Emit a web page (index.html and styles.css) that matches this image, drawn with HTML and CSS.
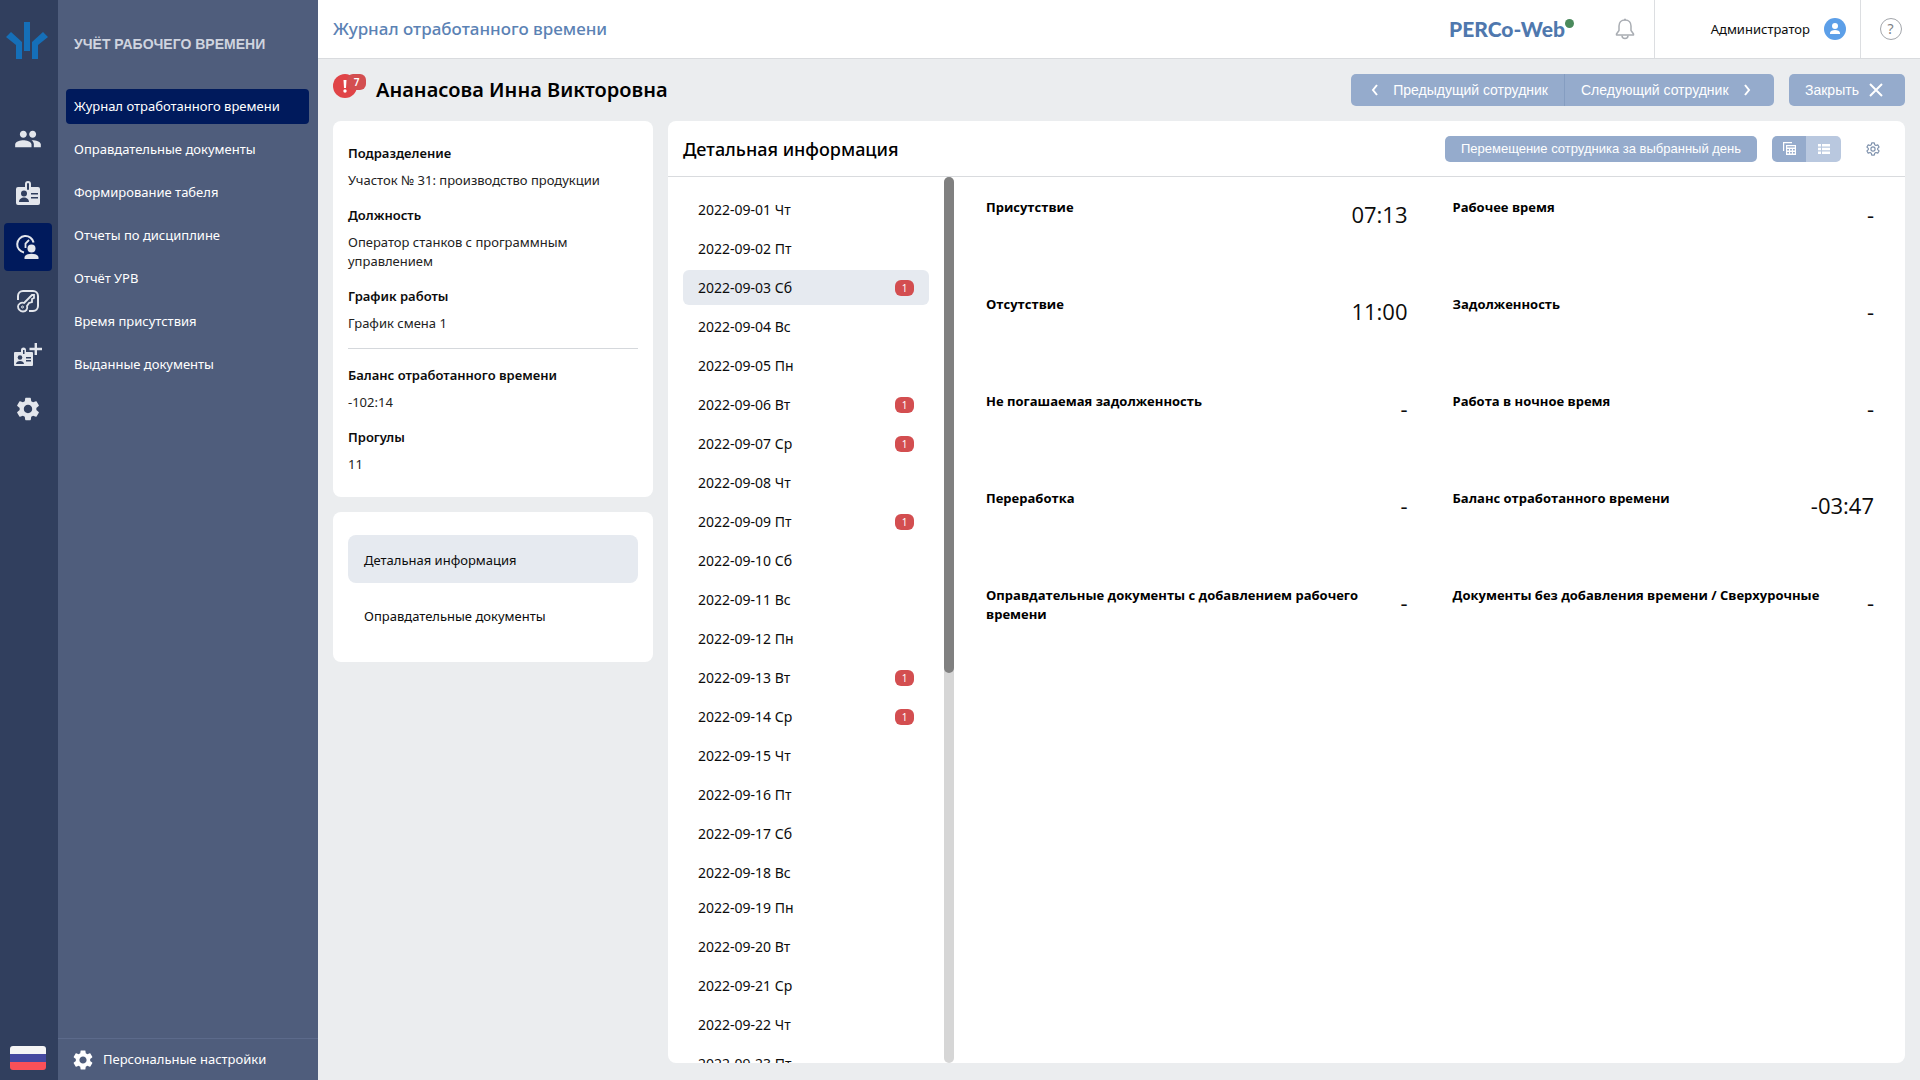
FILE: index.html
```html
<!DOCTYPE html>
<html lang="ru">
<head>
<meta charset="utf-8">
<meta name="viewport" content="width=device-width, initial-scale=1">
<title>PERCo-Web — Журнал отработанного времени</title>
<link rel="stylesheet" href="styles.css">
</head>
<body>
<div class="app">
  <nav class="rail" aria-label="Разделы">
    <a href="#" class="rail-logo" aria-label="PERCo">
      <svg width="42" height="38" viewBox="0 0 42 38" fill="#156fb8"><path d="M18 0h6v29h-6zM0 15l5-5 11 10v17h-6V23zM42 15l-5-5-11 10v17h6V23z"/></svg>
    </a>
    <div class="rail-items">
      <a href="#" class="rail-item" aria-label="Персонал">
        <svg width="28" height="28" viewBox="0 0 24 24" fill="#e3e6ec"><path d="M16 11c1.66 0 2.99-1.34 2.99-3S17.66 5 16 5s-3 1.34-3 3 1.34 3 3 3zm-8 0c1.66 0 2.99-1.34 2.99-3S9.66 5 8 5 5 6.34 5 8s1.34 3 3 3zm0 2c-2.33 0-7 1.17-7 3.5V19h14v-2.5c0-2.33-4.67-3.5-7-3.5zm8 0c-.29 0-.62.02-.97.05 1.16.84 1.97 1.97 1.97 3.45V19h6v-2.500c0-2.330-4.670-3.500-7-3.500z"/></svg>
      </a>
      <a href="#" class="rail-item" aria-label="Бюро пропусков">
        <svg width="24" height="24" viewBox="0 0 24 24"><path fill="#e3e6ec" d="M2 6h7V3a3 3 0 0 1 6 0v3h7a2 2 0 0 1 2 2v14a2 2 0 0 1-2 2H2a2 2 0 0 1-2-2V8a2 2 0 0 1 2-2z"/><rect x="11" y="2" width="2" height="7" rx="1" fill="#313f5e"/><circle cx="8" cy="12.500" r="3" fill="#313f5e"/><path d="M3 21c0-6 10-6 10 0zM15 12h7v1.600h-7zM15 16h7v1.600h-7z" fill="#313f5e"/></svg>
      </a>
      <a href="#" class="rail-item active" aria-label="Учёт рабочего времени" aria-current="page">
        <svg width="24" height="26" viewBox="0 0 24 26" fill="none"><path d="M8 18.500A8.300 8.300 0 1 1 17.600 8.500" stroke="#e3e6ec" stroke-width="2"/><path d="M9.500 14V9.500L13 6" stroke="#e3e6ec" stroke-width="1.800"/><circle cx="15.500" cy="14.500" r="4" fill="#e3e6ec"/><path d="M8.500 25v-1.500c0-5 14-5 14 0V25z" fill="#e3e6ec"/></svg>
      </a>
      <a href="#" class="rail-item" aria-label="Контроль доступа">
        <svg width="24" height="24" viewBox="0 0 24 24" fill="none" stroke="#e3e6ec" stroke-width="2"><path d="M2 11V7a5 5 0 0 1 5-5h10a5 5 0 0 1 5 5v10a5 5 0 0 1-5 5h-4"/><path d="M8 14l8-8h2v3l-2 1v3l-3 1-2 3c1 3-1 5.500-4 5.500S2 20 2 17.500 5 13 8 14z" stroke-width="1.800"/><circle cx="6.500" cy="18" r="1" stroke-width="1"/></svg>
      </a>
      <a href="#" class="rail-item" aria-label="Заказ пропуска">
        <svg width="28" height="24" viewBox="0 0 28 24"><path fill="#e3e6ec" d="M1 9h6V7a2.500 2.500 0 0 1 5 0v2h6a1 1 0 0 1 1 1v12a1 1 0 0 1-1 1H1a1 1 0 0 1-1-1V10a1 1 0 0 1 1-1z"/><path d="M9 7h1.500v4H9zM12 14h5v1.500h-5zM12 17h5v1.500h-5zM2 21c0-4 8-4 8 0z" fill="#313f5e"/><circle cx="6" cy="14.500" r="2.300" fill="#313f5e"/><path d="M15.500 6H28M21.800 0v12" stroke="#e3e6ec" stroke-width="2.400"/></svg>
      </a>
      <a href="#" class="rail-item" aria-label="Администрирование">
        <svg width="28" height="28" viewBox="0 0 24 24" fill="#e3e6ec"><use href="#gear"/></svg>
      </a>
    </div>
    <button class="lang" type="button" aria-label="Русский"><span class="flag"></span></button>
  </nav>

  <aside class="sidebar">
    <h2 class="sidebar-title">УЧЁТ РАБОЧЕГО ВРЕМЕНИ</h2>
    <nav class="menu">
      <a href="#" class="menu-item active" aria-current="page">Журнал отработанного времени</a>
      <a href="#" class="menu-item">Оправдательные документы</a>
      <a href="#" class="menu-item">Формирование табеля</a>
      <a href="#" class="menu-item">Отчеты по дисциплине</a>
      <a href="#" class="menu-item">Отчёт УРВ</a>
      <a href="#" class="menu-item">Время присутствия</a>
      <a href="#" class="menu-item">Выданные документы</a>
    </nav>
    <a href="#" class="personal">
      <svg width="24" height="24" viewBox="0 0 24 24" fill="#fff"><path id="gear" d="M19.140 12.940c.04-.3.06-.61.06-.94s-.02-.64-.07-.94l2.030-1.580c.18-.14.23-.41.12-.61l-1.920-3.320c-.12-.22-.37-.29-.59-.22l-2.390.96c-.5-.38-1.030-.7-1.620-.94L14.400 2.810c-.04-.24-.24-.41-.48-.41h-3.840c-.24 0-.43.17-.47.41l-.36 2.540c-.59.24-1.130.57-1.620.94l-2.390-.96c-.22-.08-.47 0-.59.22L2.740 8.870c-.12.21-.08.47.12.61l2.030 1.580c-.05.3-.09.63-.09.94s.02.64.07.94l-2.030 1.580c-.18.14-.23.41-.12.61l1.920 3.320c.12.22.37.29.59.22l2.390-.96c.5.38 1.030.7 1.620.94l.36 2.540c.05.24.24.41.48.41h3.840c.24 0 .44-.17.47-.41l.36-2.540c.59-.24 1.130-.56 1.620-.94l2.390.96c.22.08.47 0 .59-.22l1.920-3.320c.12-.22.07-.47-.12-.61l-2.010-1.580zM12 15.600c-1.980 0-3.600-1.620-3.600-3.600s1.620-3.600 3.600-3.600 3.600 1.620 3.600 3.600-1.620 3.600-3.600 3.600z"/></svg>
      Персональные настройки
    </a>
  </aside>

  <main class="main">
    <header class="topbar">
      <h1 class="page-title">Журнал отработанного времени</h1>
      <div class="brand">PERCo-Web<span class="brand-dot"></span></div>
      <button class="icon-btn bell" type="button" aria-label="Уведомления">
        <svg width="20" height="22" viewBox="0 0 20 22" fill="none" stroke="#a9adb3" stroke-width="1.500"><path d="M10 2c-4 0-6 2.800-6 6v4.500L1.500 16v1h17v-1L16 12.500V8c0-3.200-2-6-6-6z" stroke-linejoin="round"/><path d="M7 17.500c0 4 6 4 6 0M9 1.500h2"/></svg>
      </button>
      <button class="user" type="button">Администратор
        <svg width="22" height="22" viewBox="0 0 22 22"><circle cx="11" cy="11" r="11" fill="#5c9fe8"/><circle cx="11" cy="8" r="3" fill="#fff"/><path d="M6 16v-1c0-4 10-4 10 0v1z" fill="#fff"/></svg>
      </button>
      <button class="icon-btn help" type="button" aria-label="Справка"><span class="help-mark">?</span></button>
    </header>

    <div class="employee">
      <span class="alert">
        <svg width="24" height="24" viewBox="0 0 24 24"><circle cx="12" cy="12" r="12" fill="#e04447"/><path d="M10.500 6h3l-.5 8h-2z" fill="#fff"/><circle cx="12" cy="17" r="1.700" fill="#fff"/></svg>
        <span class="alert-count">7</span>
      </span>
      <h2 class="employee-name">Ананасова Инна Викторовна</h2>
      <div class="pager">
        <button class="btn prev" type="button"><svg width="8" height="12" viewBox="0 0 8 12"><path d="M6 1L2 6l4 5"/></svg>Предыдущий сотрудник</button>
        <button class="btn next" type="button">Следующий сотрудник<svg width="8" height="12" viewBox="0 0 8 12"><path d="M2 1l4 5-4 5"/></svg></button>
      </div>
      <button class="btn close" type="button">Закрыть<svg width="14" height="14" viewBox="0 0 14 14"><path d="M1 1l12 12M13 1L1 13"/></svg></button>
    </div>

    <div class="content">
      <div class="side">
        <section class="card info">
          <dl class="facts">
            <div><dt>Подразделение</dt><dd>Участок № 31: производство продукции</dd></div>
            <div><dt>Должность</dt><dd>Оператор станков с программным управлением</dd></div>
            <div><dt>График работы</dt><dd>График смена 1</dd></div>
          </dl>
          <dl class="facts totals">
            <div><dt>Баланс отработанного времени</dt><dd>-102:14</dd></div>
            <div><dt>Прогулы</dt><dd>11</dd></div>
          </dl>
        </section>
        <nav class="card tabs">
          <a href="#" class="tab active" aria-current="page">Детальная информация</a>
          <a href="#" class="tab">Оправдательные документы</a>
        </nav>
      </div>

      <section class="card details">
        <header class="details-head">
          <h3 class="details-title">Детальная информация</h3>
          <button class="btn small" type="button">Перемещение сотрудника за выбранный день</button>
          <div class="toggle">
            <button class="toggle-btn" type="button" aria-label="Таблица"><svg width="13" height="13" viewBox="0 0 13 13"><path d="M0 9V0h9v1.200H1.200V9z" fill="#fff"/><path d="M3 3h10v10H3z" fill="#fff"/><path d="M4.200 4.200h7.600v1.300H4.200zM4.200 7h1.800v1.500H4.200zM7.100 7h1.800v1.500H7.100zM10 7h1.800v1.500H10zM4.200 10h1.800v1.500H4.200zM7.100 10h1.800v1.500H7.100zM10 10h1.800v1.500H10z" fill="#95abcc"/></svg></button>
            <button class="toggle-btn on" type="button" aria-label="Список" aria-pressed="true"><svg width="12" height="10" viewBox="0 0 12 10" fill="#fff"><path d="M0 0h3v2.600H0zM4 0h8v2.600H4zM0 3.700h3v2.600H0zM4 3.700h8v2.600H4zM0 7.400h3V10H0zM4 7.400h8V10H4z"/></svg></button>
          </div>
          <button class="icon-btn settings" type="button" aria-label="Настройки">
            <svg width="14" height="14" viewBox="0 0 24 24" fill="none" stroke="#7f92ad" stroke-width="2"><path d="M9.800 1.500h4.400l.8 3.300 2 1.100 3.200-1 2.200 3.800-2.400 2.300v2l2.400 2.300-2.200 3.800-3.200-1-2 1.100-.8 3.300H9.800L9 19.200l-2-1.100-3.200 1-2.200-3.800L4 13v-2L1.600 8.700l2.200-3.800 3.200 1 2-1.100z" stroke-linejoin="round"/><circle cx="12" cy="12" r="3.600"/></svg>
          </button>
        </header>
        <div class="details-body">
          <div class="days">
            <button class="day" type="button">2022-09-01 Чт</button>
            <button class="day" type="button">2022-09-02 Пт</button>
            <button class="day active" type="button">2022-09-03 Сб<span class="count">1</span></button>
            <button class="day" type="button">2022-09-04 Вс</button>
            <button class="day" type="button">2022-09-05 Пн</button>
            <button class="day" type="button">2022-09-06 Вт<span class="count">1</span></button>
            <button class="day" type="button">2022-09-07 Ср<span class="count">1</span></button>
            <button class="day" type="button">2022-09-08 Чт</button>
            <button class="day" type="button">2022-09-09 Пт<span class="count">1</span></button>
            <button class="day" type="button">2022-09-10 Сб</button>
            <button class="day" type="button">2022-09-11 Вс</button>
            <button class="day" type="button">2022-09-12 Пн</button>
            <button class="day" type="button">2022-09-13 Вт<span class="count">1</span></button>
            <button class="day" type="button">2022-09-14 Ср<span class="count">1</span></button>
            <button class="day" type="button">2022-09-15 Чт</button>
            <button class="day" type="button">2022-09-16 Пт</button>
            <button class="day" type="button">2022-09-17 Сб</button>
            <button class="day page-end" type="button">2022-09-18 Вс</button>
            <button class="day" type="button">2022-09-19 Пн</button>
            <button class="day" type="button">2022-09-20 Вт</button>
            <button class="day" type="button">2022-09-21 Ср</button>
            <button class="day" type="button">2022-09-22 Чт</button>
            <button class="day" type="button">2022-09-23 Пт</button>
          </div>
          <div class="scrollbar"><div class="thumb"></div></div>
          <dl class="stats">
            <div class="stat"><dt>Присутствие</dt><dd>07:13</dd></div>
            <div class="stat"><dt>Рабочее время</dt><dd>-</dd></div>
            <div class="stat"><dt>Отсутствие</dt><dd>11:00</dd></div>
            <div class="stat"><dt>Задолженность</dt><dd>-</dd></div>
            <div class="stat"><dt>Не погашаемая задолженность</dt><dd>-</dd></div>
            <div class="stat"><dt>Работа в ночное время</dt><dd>-</dd></div>
            <div class="stat"><dt>Переработка</dt><dd>-</dd></div>
            <div class="stat"><dt>Баланс отработанного времени</dt><dd>-03:47</dd></div>
            <div class="stat"><dt>Оправдательные документы с добавлением рабочего времени</dt><dd>-</dd></div>
            <div class="stat"><dt>Документы без добавления времени / Сверхурочные</dt><dd>-</dd></div>
          </dl>
        </div>
      </section>
    </div>
  </main>
</div>
</body>
</html>
```
FILE: styles.css
```css
* { box-sizing: border-box; }

body {
  margin: 0;
  font: 13px/19px "Noto Sans", "Open Sans", sans-serif;
  color: #0c0c0c;
  background: #ebedef;
}

h1, h2, h3, dl, dd { margin: 0; }
a { color: inherit; text-decoration: none; }
button { font: inherit; color: inherit; background: none; border: 0; padding: 0; cursor: pointer; }
svg { flex: none; display: block; }

.app { display: flex; height: 100vh; }

/* Icon rail */
.rail {
  flex: none;
  width: 58px;
  display: flex;
  flex-direction: column;
  background: #313f5e;
}
.rail-logo { height: 115px; padding: 22px 0 0 6px; }
.rail-items { flex: 1; display: flex; flex-direction: column; gap: 6px; padding-left: 4px; }
.rail-item {
  width: 48px;
  height: 48px;
  display: grid;
  place-items: center;
  border-radius: 4px;
}
.rail-item.active { background: #001a5c; }
.lang { padding: 0 0 10px 10px; }
.flag {
  display: block;
  width: 36px;
  height: 24px;
  border-radius: 3px;
  background: linear-gradient(#f5f5f5 0 8px, #4549a0 8px 16px, #fb5058 16px);
}

/* Section menu */
.sidebar {
  flex: none;
  width: 260px;
  display: flex;
  flex-direction: column;
  background: #4f5d7c;
  color: #fff;
}
.sidebar-title {
  height: 89px;
  padding-left: 16px;
  font: bold 14px/88px "Liberation Sans", Arial, sans-serif;
  color: #cfd4df;
}
.menu { flex: 1; display: flex; flex-direction: column; gap: 8px; padding: 0 9px 0 8px; }
.menu-item { padding: 8px; border-radius: 4px; }
.menu-item.active { background: #001a5c; }
.personal {
  height: 42px;
  display: flex;
  align-items: center;
  gap: 8px;
  padding-left: 13px;
  border-top: 1px solid #5c6a8b;
}

/* Top bar */
.main { flex: 1; min-width: 0; display: flex; flex-direction: column; }
.topbar {
  flex: none;
  height: 59px;
  display: flex;
  align-items: stretch;
  background: #fff;
  border-bottom: 1px solid #d9dbde;
}
.page-title {
  flex: 1;
  padding-left: 15px;
  font-size: 17px;
  font-weight: 500;
  line-height: 58px;
  color: #5b82b4;
}
.brand {
  display: flex;
  font: 900 21px/58px Lato, sans-serif;
  color: #4f78ae;
}
.brand-dot { width: 9px; height: 9px; margin-top: 19px; border-radius: 50%; background: #4a8a5c; }
.icon-btn { display: grid; place-items: center; }
.bell { width: 58px; margin-left: 22px; }
.user {
  width: 207px;
  display: flex;
  align-items: center;
  justify-content: flex-end;
  gap: 14px;
  padding-right: 14px;
  border: solid #dcdee1;
  border-width: 0 1px;
}
.help { width: 59px; }
.help-mark {
  width: 22px;
  height: 22px;
  border: 1px solid #a3a6ab;
  border-radius: 50%;
  font-size: 14px;
  line-height: 20px;
  color: #7b7f86;
}

/* Employee heading */
.employee { flex: none; height: 62px; display: flex; align-items: center; padding: 0 15px; }
.alert { position: relative; width: 43px; height: 32px; }
.alert-count {
  position: absolute;
  top: 0;
  left: 14px;
  width: 19px;
  height: 16px;
  border-radius: 6px;
  background: #d34e50;
  color: #fff;
  font-size: 10px;
  font-weight: 600;
  line-height: 16px;
  text-align: center;
}
.employee-name { flex: 1; font-size: 20px; font-weight: 600; line-height: 28px; color: #000; }
.btn {
  height: 32px;
  display: flex;
  align-items: center;
  justify-content: center;
  border-radius: 5px;
  background: #95abcc;
  color: #fff;
  font: 14px/20px "Liberation Sans", Arial, sans-serif;
}
.btn path { fill: none; stroke: #fff; stroke-width: 2; }
.pager { display: flex; }
.prev,
.next,
.close { padding: 0 16px; gap: 14px; }
.prev { width: 214px; justify-content: flex-end; border-right: 1px solid #859dc1; border-radius: 5px 0 0 5px; }
.next { width: 209px; justify-content: flex-start; border-radius: 0 5px 5px 0; }
.close { width: 116px; margin-left: 15px; justify-content: flex-start; gap: 10px; }

/* Cards */
.content { flex: 1; min-height: 0; display: flex; gap: 15px; padding: 0 15px 17px; }
.card { background: #fff; border-radius: 8px; }
.side { flex: none; width: 320px; display: flex; flex-direction: column; gap: 15px; }
.info { padding: 23px 15px; }
.facts { display: flex; flex-direction: column; gap: 16px; }
.facts dt { font-weight: 600; margin-bottom: 8px; }
.facts dd { color: #222; }
.totals { margin-top: 15px; padding-top: 17px; border-top: 1px solid #d5d8dc; }
.tabs { display: flex; flex-direction: column; gap: 8px; padding: 23px 15px; }
.tab { height: 48px; padding-left: 16px; border-radius: 8px; line-height: 50px; }
.tab.active { background: #e6eaf0; }

/* Details card */
.details { flex: 1; min-width: 0; display: flex; flex-direction: column; overflow: hidden; }
.details-head {
  flex: none;
  height: 56px;
  display: flex;
  align-items: center;
  padding: 0 15px;
  border-bottom: 1px solid #d9dbde;
}
.details-title { flex: 1; font-size: 18px; font-weight: 500; line-height: 28px; color: #000; }
.small { height: 26px; width: 312px; font-size: 13px; }
.toggle { display: flex; margin-left: 15px; border-radius: 5px; overflow: hidden; }
.toggle-btn { width: 34px; height: 26px; display: grid; place-items: center; background: #95abcc; }
.toggle-btn.on { width: 35px; background: #b9c8df; }
.settings { width: 34px; height: 26px; margin-left: 15px; }
.details-body { flex: 1; min-height: 0; display: flex; }
.days {
  flex: none;
  width: 276px;
  display: flex;
  flex-direction: column;
  padding: 15px 15px 0;
  overflow: hidden;
}
.day {
  flex: none;
  height: 35px;
  margin-bottom: 4px;
  padding: 0 15px;
  display: flex;
  align-items: center;
  justify-content: space-between;
  border-radius: 6px;
  font-size: 14px;
}
.day.active { background: #e6eaf0; }
.day.page-end { margin-bottom: 0; }
.count {
  width: 19px;
  height: 16px;
  border-radius: 6px;
  background: #d34e50;
  color: #fff;
  font-size: 10px;
  line-height: 16px;
  text-align: center;
}
.scrollbar { flex: none; width: 10px; border-radius: 5px; background: #d6d6d6; }
.thumb { height: 56%; border-radius: 5px; background: #808080; }
.stats {
  flex: 1;
  display: grid;
  grid-template-columns: 1fr 1fr;
  grid-auto-rows: 97px;
  gap: 0 45px;
  padding: 21px 31px 0 32px;
  font-family: "Open Sans", "Noto Sans", sans-serif;
}
.stat { display: flex; justify-content: space-between; gap: 24px; }
.stat dt { font-weight: 700; color: #000; }
.stat dd { padding-top: 2px; font-size: 22px; line-height: 28px; }
```
